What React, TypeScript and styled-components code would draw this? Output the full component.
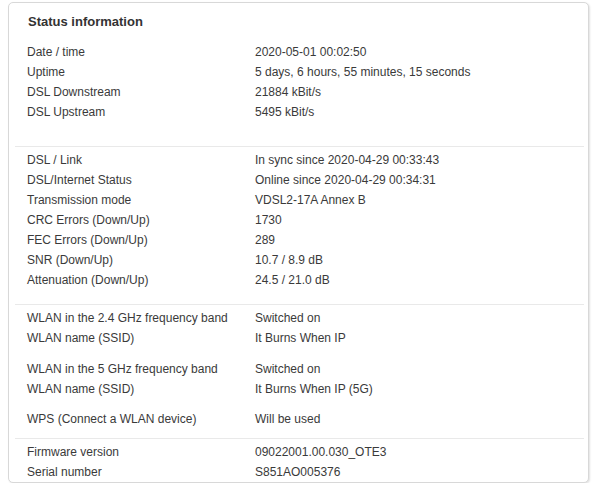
import { FC } from "react";
import styled, { createGlobalStyle } from "styled-components";

const GlobalStyle = createGlobalStyle`
  html, body {
    margin: 0;
    padding: 0;
    background: #ffffff;
  }
  body {
    font-family: "Liberation Sans", Arial, sans-serif;
    color: #3a3a3a;
  }
`;

const Page = styled.div`
  padding: 2px 0 0 8px;
`;

const Panel = styled.div`
  width: 579px;
  height: 479px;
  border: 1px solid #d8d8d8;
  border-radius: 5px;
  box-shadow: 1px 1px 2px rgba(0, 0, 0, 0.12);
  background: #fff;
  overflow: hidden;
`;

const Title = styled.h2`
  margin: 9px 0 10px 19px;
  font-size: 13px;
  line-height: 20px;
  font-weight: bold;
  color: #333;
`;

const Section = styled.div<{ $top: number; $bottom: number; $line?: boolean }>`
  margin: 0 4px 0 6px;
  padding: ${(p) => p.$top}px 0 ${(p) => p.$bottom}px 12px;
  border-top: ${(p) => (p.$line ? "1px solid #e9e9e9" : "none")};
  display: flex;
  flex-direction: column;
  gap: 10.5px;
`;

const Group = styled.div`
  display: flex;
  flex-direction: column;
`;

const Row = styled.div`
  display: grid;
  grid-template-columns: 228px 1fr;
  height: 20px;
  font-size: 12px;
  line-height: 20px;
  white-space: nowrap;
`;

const Label = styled.span``;
const Value = styled.span``;

type Pair = [string, string];

const Rows: FC<{ items: Pair[] }> = ({ items }) => (
  <Group>
    {items.map(([l, v]) => (
      <Row key={l + v}>
        <Label>{l}</Label>
        <Value>{v}</Value>
      </Row>
    ))}
  </Group>
);

const App: FC = () => {
  return (
    <>
      <GlobalStyle />
      <Page>
        <Panel>
          <Title>Status information</Title>
          <Section $top={0} $bottom={24}>
            <Rows
              items={[
                ["Date / time", "2020-05-01 00:02:50"],
                ["Uptime", "5 days, 6 hours, 55 minutes, 15 seconds"],
                ["DSL Downstream", "21884 kBit/s"],
                ["DSL Upstream", "5495 kBit/s"],
              ]}
            />
          </Section>
          <Section $top={3} $bottom={14} $line>
            <Rows
              items={[
                ["DSL / Link", "In sync since 2020-04-29 00:33:43"],
                ["DSL/Internet Status", "Online since 2020-04-29 00:34:31"],
                ["Transmission mode", "VDSL2-17A Annex B"],
                ["CRC Errors (Down/Up)", "1730"],
                ["FEC Errors (Down/Up)", "289"],
                ["SNR (Down/Up)", "10.7 / 8.9 dB"],
                ["Attenuation (Down/Up)", "24.5 / 21.0 dB"],
              ]}
            />
          </Section>
          <Section $top={3} $bottom={9} $line>
            <Rows
              items={[
                ["WLAN in the 2.4 GHz frequency band", "Switched on"],
                ["WLAN name (SSID)", "It Burns When IP"],
              ]}
            />
            <Rows
              items={[
                ["WLAN in the 5 GHz frequency band", "Switched on"],
                ["WLAN name (SSID)", "It Burns When IP (5G)"],
              ]}
            />
            <Rows items={[["WPS (Connect a WLAN device)", "Will be used"]]} />
          </Section>
          <Section $top={3} $bottom={0} $line>
            <Rows
              items={[
                ["Firmware version", "09022001.00.030_OTE3"],
                ["Serial number", "S851AO005376"],
              ]}
            />
          </Section>
        </Panel>
      </Page>
    </>
  );
};

export default App;
